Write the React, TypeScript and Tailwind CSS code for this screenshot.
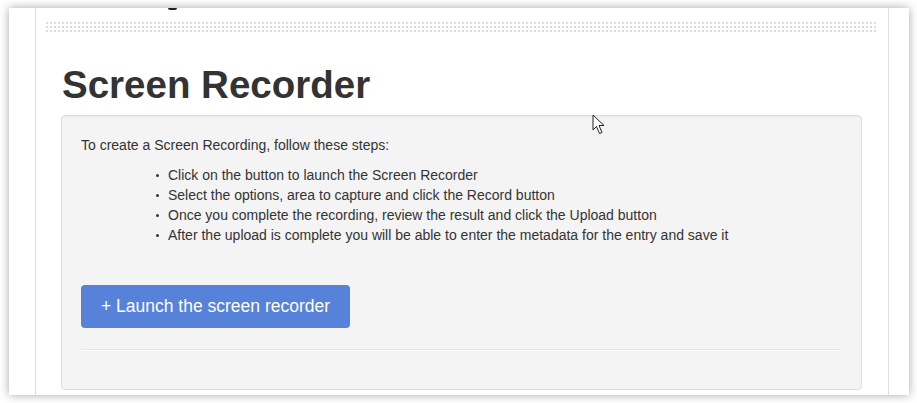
const steps = [
  "Click on the button to launch the Screen Recorder",
  "Select the options, area to capture and click the Record button",
  "Once you complete the recording, review the result and click the Upload button",
  "After the upload is complete you will be able to enter the metadata for the entry and save it",
];

function Cursor() {
  return (
    <svg
      className="absolute left-[592px] top-[114px]"
      width="16"
      height="22"
      viewBox="0 0 16 22"
    >
      <path
        d="M1 1 L1 16 L4.5 12.5 L7.5 19.5 L10 18.5 L7 11.5 L12 11.5 Z"
        fill="#fff"
        stroke="#222"
        strokeWidth="1"
        strokeLinejoin="round"
      />
    </svg>
  );
}

export default function App() {
  return (
    <div className="relative w-[917px] h-[403px] overflow-hidden bg-white font-['Liberation_Sans',Arial,sans-serif] text-[#333]">
      <div className="ml-[9px] mt-[8px] flex h-[387px] w-[900px] bg-white shadow-[0_0_9px_rgba(0,0,0,0.35)]">
        <div className="w-[27px] border-r border-[#dedede]" />
        <div className="relative w-[852px]">
          {/* descender of the heading cut off above */}
          <div className="absolute left-[132px] top-0 h-[2px] w-[9px] rounded-b-full bg-[#222]" />
          <div className="ml-[8px] mt-[14px] h-[10px] w-[832px] bg-[linear-gradient(90deg,#fff_2px,transparent_2px),linear-gradient(#dcdcdc_2px,transparent_2px)] bg-[length:4px_4px]" />
          <h1 className="ml-[26px] mt-[31px] text-[38.5px] font-bold leading-[44px] text-[#333]">
            Screen Recorder
          </h1>
          <div className="ml-[25px] mt-[8px] h-[275px] w-[801px] rounded-[4px] border border-[#dedede] bg-[#f4f4f4] px-[19px] pt-[19px] shadow-[inset_0_1px_1px_rgba(0,0,0,0.04)]">
            <p className="mb-[10px] text-[14px] leading-[20px]">
              To create a Screen Recording, follow these steps:
            </p>
            <ul className="pl-[75px] text-[14px] leading-[20px]">
              {steps.map((s) => (
                <li key={s} className="flex items-center">
                  <span className="mr-[9px] h-[3px] w-[3px] rounded-full bg-[#333]" />
                  {s}
                </li>
              ))}
            </ul>
            <button className="mt-[40px] inline-flex h-[43px] items-center rounded-[4px] bg-[#5682da] px-[20px] text-[17.5px] text-white">
              + Launch the screen recorder
            </button>
            <hr className="mt-[21px] border-t border-b border-t-[#e4e4e4] border-b-white" />
          </div>
        </div>
        <div className="w-[21px] border-l border-[#dedede]" />
      </div>
      <Cursor />
    </div>
  );
}
